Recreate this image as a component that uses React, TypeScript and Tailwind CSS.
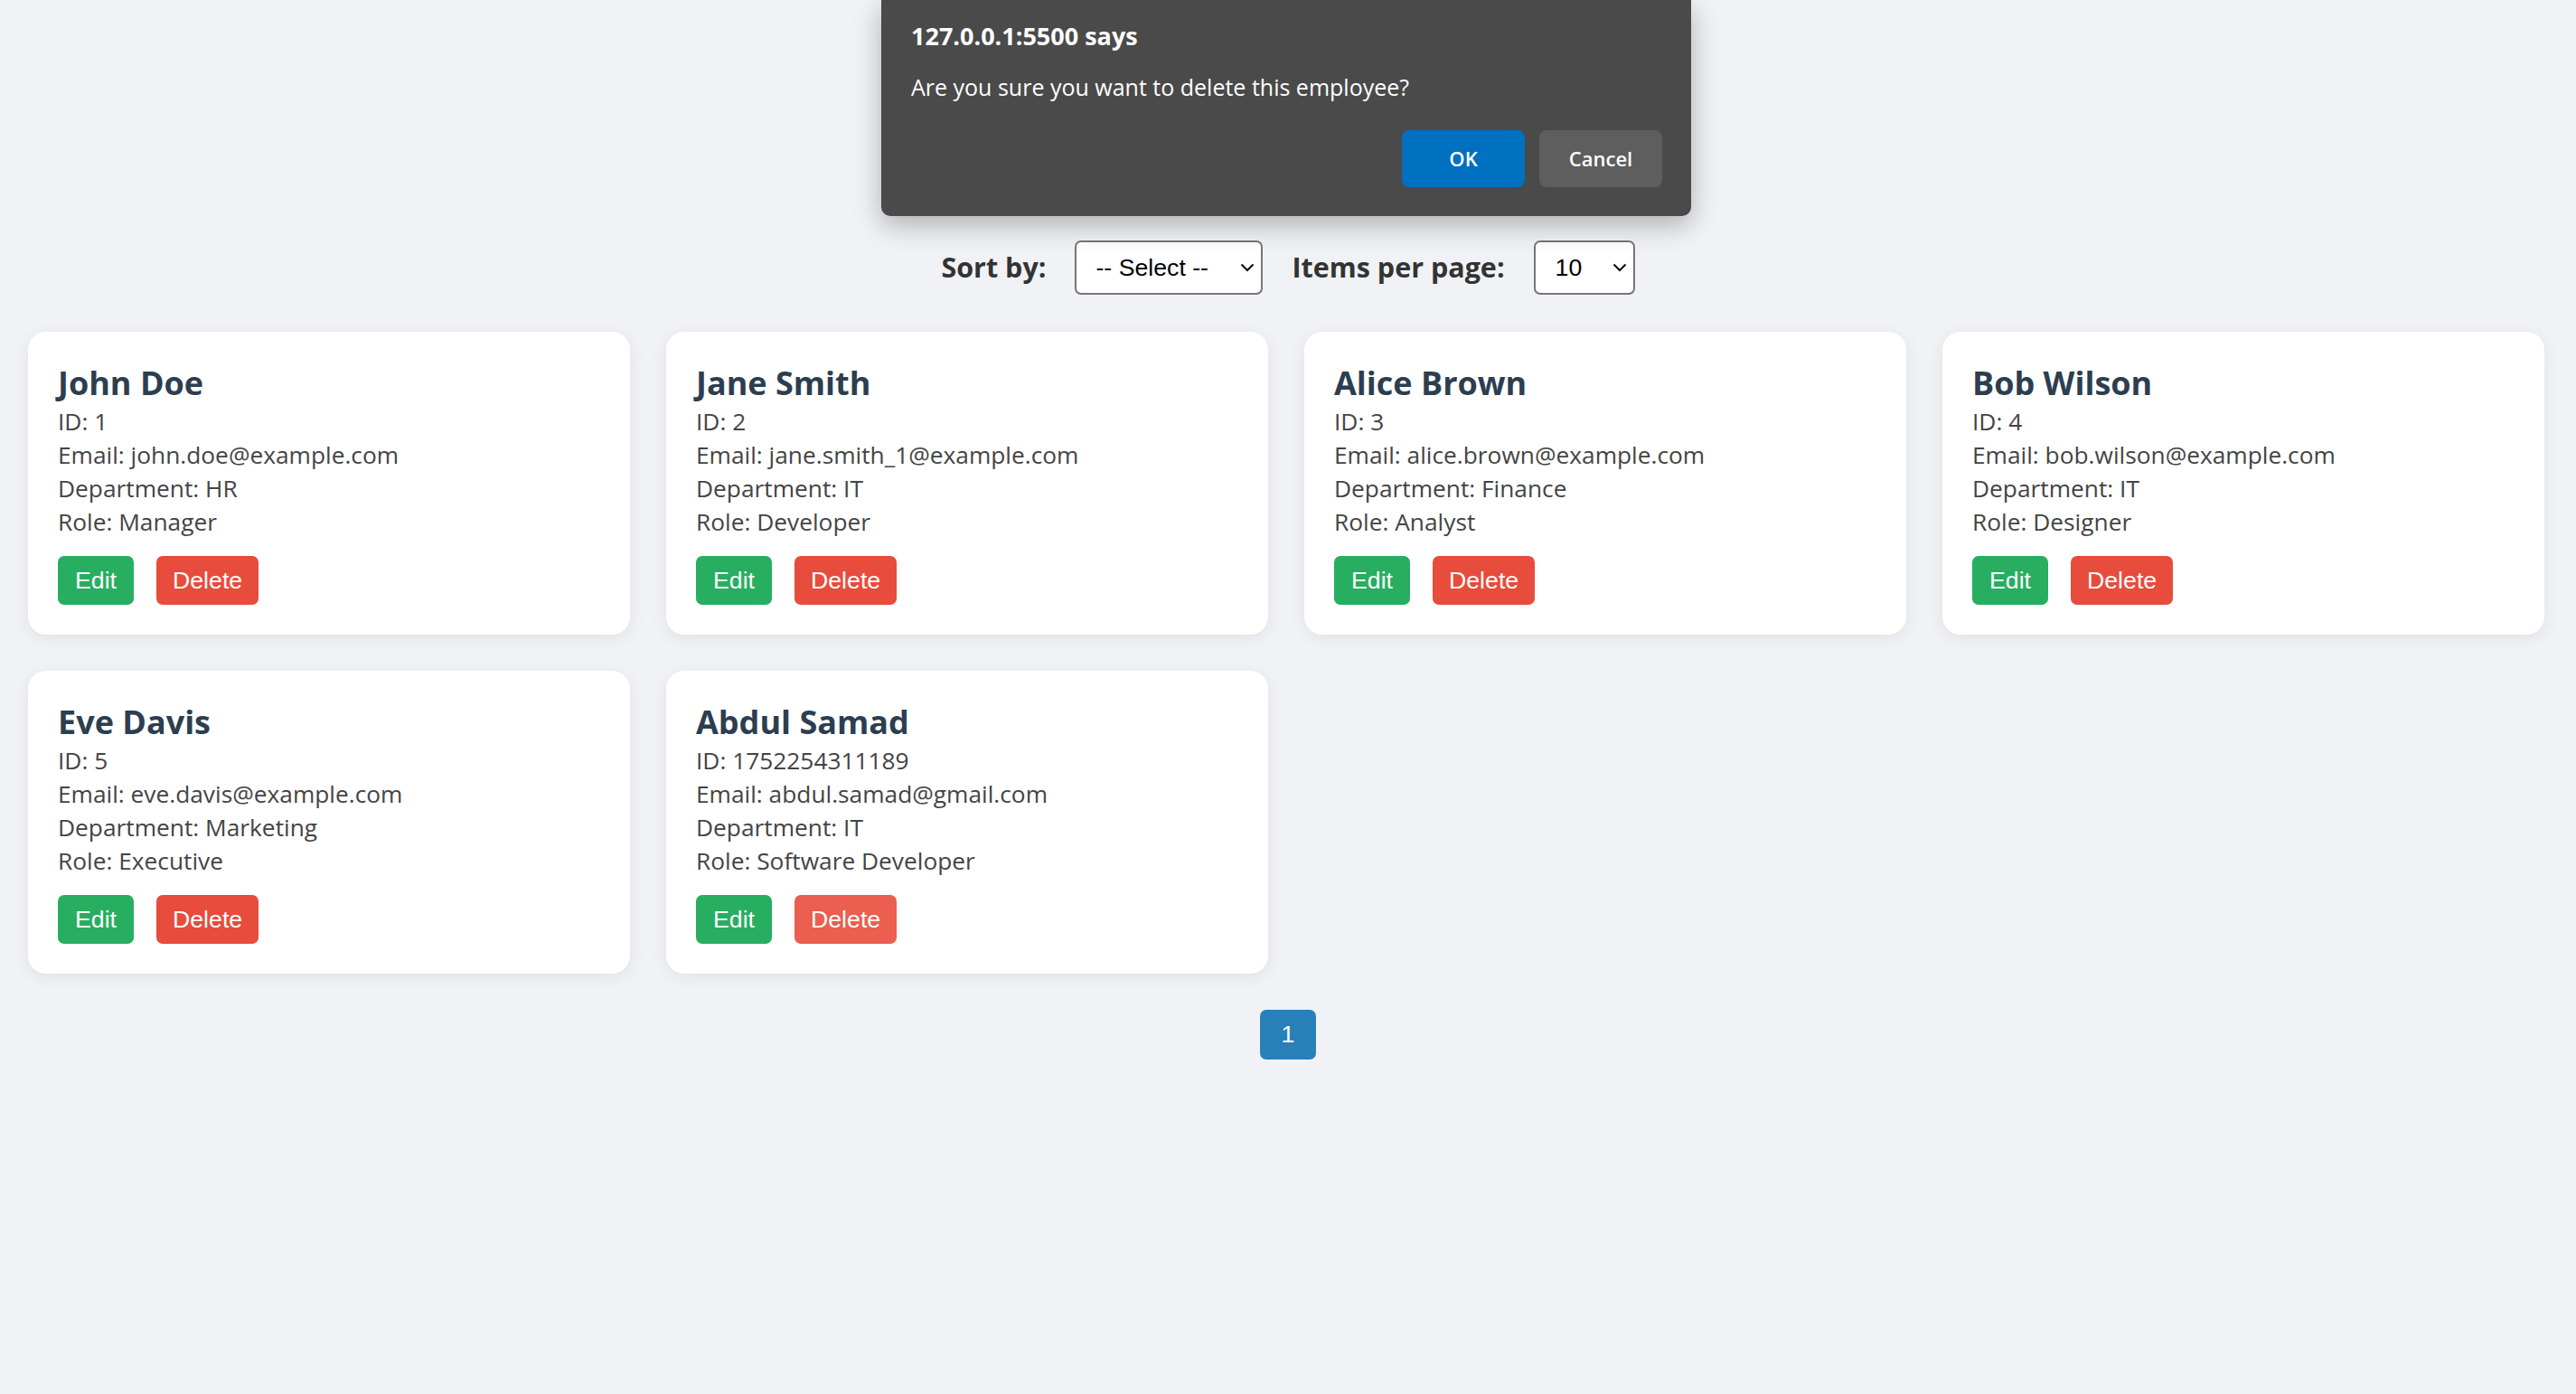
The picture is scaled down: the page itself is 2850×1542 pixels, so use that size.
import React from "react";

type Employee = {
  id: number;
  name: string;
  email: string;
  department: string;
  role: string;
};

const employees: Employee[] = [
  { id: 1, name: "John Doe", email: "john.doe@example.com", department: "HR", role: "Manager" },
  { id: 2, name: "Jane Smith", email: "jane.smith_1@example.com", department: "IT", role: "Developer" },
  { id: 3, name: "Alice Brown", email: "alice.brown@example.com", department: "Finance", role: "Analyst" },
  { id: 4, name: "Bob Wilson", email: "bob.wilson@example.com", department: "IT", role: "Designer" },
  { id: 5, name: "Eve Davis", email: "eve.davis@example.com", department: "Marketing", role: "Executive" },
  { id: 1752254311189, name: "Abdul Samad", email: "abdul.samad@gmail.com", department: "IT", role: "Software Developer" },
];

const Chevron = () => (
  <svg
    width="16"
    height="10"
    viewBox="0 0 16 10"
    className="absolute right-[9px] top-1/2 -translate-y-1/2 pointer-events-none"
  >
    <path d="M1.5 1.5 L8 8 L14.5 1.5" fill="none" stroke="#111" strokeWidth="2.2" />
  </svg>
);

const EmployeeCard = ({ emp, hovered }: { emp: Employee; hovered?: boolean }) => (
  <div className="bg-white rounded-[20px] p-[33px] shadow-[0_4px_18px_rgba(0,0,0,0.07)]">
    <h3 className="text-[36px] leading-[48px] font-bold text-[#2c3e50]">{emp.name}</h3>
    <p className="text-[26.3px] leading-[37px] text-[#444]">ID: {emp.id}</p>
    <p className="text-[26.3px] leading-[37px] text-[#444]">Email: {emp.email}</p>
    <p className="text-[26.3px] leading-[37px] text-[#444]">Department: {emp.department}</p>
    <p className="text-[26.3px] leading-[37px] text-[#444]">Role: {emp.role}</p>
    <div className="flex gap-[25px] mt-[19px] font-['Liberation_Sans',Arial,sans-serif]">
      <button className="h-[54px] px-[19px] rounded-[7px] bg-[#27ae60] text-white text-[26.7px]">
        Edit
      </button>
      <button
        className={
          hovered
            ? "h-[54px] px-[18px] rounded-[7px] bg-[#eb5e50] text-white text-[26.7px]"
            : "h-[54px] px-[18px] rounded-[7px] bg-[#e74c3c] text-white text-[26.7px]"
        }
      >
        Delete
      </button>
    </div>
  </div>
);

export default function App() {
  return (
    <div className="min-h-screen bg-[#f0f2f5] font-['Open_Sans',sans-serif] relative">
      {/* toolbar */}
      <div className="pt-[266px] flex items-center justify-center gap-[32px]">
        <label className="text-[30.5px] font-bold text-[#333]">Sort by:</label>
        <div className="relative w-[208px] h-[60px]">
          <select className="appearance-none w-full h-full border-2 border-[#767676] rounded-[7px] bg-white pl-[21px] text-[26.7px] text-black font-['Liberation_Sans',Arial,sans-serif]">
            <option>-- Select --</option>
          </select>
          <Chevron />
        </div>
        <label className="text-[30.5px] font-bold text-[#333]">Items per page:</label>
        <div className="relative w-[112px] h-[60px]">
          <select className="appearance-none w-full h-full border-2 border-[#767676] rounded-[7px] bg-white pl-[22px] text-[26.7px] text-black font-['Liberation_Sans',Arial,sans-serif]">
            <option>10</option>
          </select>
          <Chevron />
        </div>
      </div>

      {/* cards */}
      <div className="grid grid-cols-4 gap-[40px] pl-[31px] pr-[35px] mt-[41px]">
        {employees.map((emp) => (
          <EmployeeCard key={emp.id} emp={emp} hovered={emp.name === "Abdul Samad"} />
        ))}
      </div>

      {/* pagination */}
      <div className="flex justify-center mt-[40px]">
        <button className="w-[62px] h-[55px] rounded-[7px] bg-[#2980b9] text-white text-[26.7px] font-['Liberation_Sans',Arial,sans-serif]">
          1
        </button>
      </div>

      {/* browser confirm dialog */}
      <div className="absolute top-0 left-[975px] w-[896px] h-[239px] bg-[#4a4a4a] rounded-b-[10px] shadow-[0_10px_30px_rgba(0,0,0,0.28)] px-[33px] pt-[22px]">
        <p className="text-[27px] leading-[36px] font-bold text-white">127.0.0.1:5500 says</p>
        <p className="mt-[21px] text-[25px] leading-[34px] text-white">
          Are you sure you want to delete this employee?
        </p>
        <div className="flex justify-end gap-[16px] mt-[31px] mr-[-1px]">
          <button className="w-[136px] h-[63px] rounded-[8px] bg-[#0070c1] text-white text-[22px] font-semibold">
            OK
          </button>
          <button className="w-[136px] h-[63px] rounded-[8px] bg-[#5e5e5e] text-white text-[22px] font-semibold">
            Cancel
          </button>
        </div>
      </div>
    </div>
  );
}
